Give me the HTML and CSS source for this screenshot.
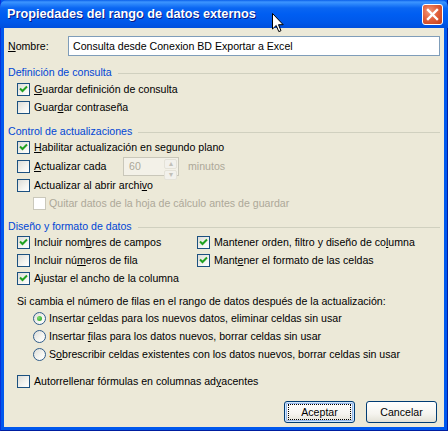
FILE: index.html
```html
<!DOCTYPE html>
<html lang="es">

<head>
    <meta charset="UTF-8">
    <title>Propiedades del rango de datos externos</title>
    <link rel="stylesheet" href="styles.css">
</head>

<body>
    <div class="window">
        <div class="titlebar">
            <span class="title">Propiedades del rango de datos externos</span>
            <span class="close">
                <svg width="13" height="13" viewBox="0 0 13 13">
                    <path d="M2 2 L11 11 M11 2 L2 11" stroke="#fff" stroke-width="2.4" stroke-linecap="square" />
                </svg>
            </span>
        </div>

        <div class="content">
            <div class="name-row">
                <label class="name-label"><u>N</u>ombre:</label>
                <div class="textbox">Consulta desde Conexion BD Exportar a Excel</div>
            </div>

            <div class="group-head">Definición de consulta</div>
            <div class="opt"><span class="box checked"></span><span><u>G</u>uardar definición de consulta</span></div>
            <div class="opt"><span class="box"></span><span>Guar<u>d</u>ar contraseña</span></div>

            <div class="group-head gap-8">Control de actualizaciones</div>
            <div class="opt"><span class="box checked"></span><span><u>H</u>abilitar actualización en segundo plano</span></div>
            <div class="opt tall">
                <span class="box"></span><span class="every"><u>A</u>ctualizar cada</span>
                <span class="spin">
                    <span class="spin-val">60</span>
                    <span class="spin-btns"><span class="spin-btn">&#9652;</span><span class="spin-btn">&#9662;</span></span>
                </span>
                <span class="muted minutes">minutos</span>
            </div>
            <div class="opt"><span class="box"></span><span>Actualizar al abrir archi<u>v</u>o</span></div>
            <div class="opt sub"><span class="box disabled"></span><span class="muted">Quitar datos de la hoja de cálculo antes de guardar</span></div>

            <div class="group-head gap-7">Diseño y formato de datos</div>
            <div class="two-col">
                <div class="opt"><span class="box checked"></span><span>Incluir nom<u>b</u>res de campos</span></div>
                <div class="opt flat"><span class="box checked"></span><span>Mantener orden, filtro y diseño de co<u>l</u>umna</span></div>
                <div class="opt"><span class="box"></span><span>Incluir nú<u>m</u>eros de fila</span></div>
                <div class="opt flat"><span class="box checked"></span><span>Mant<u>e</u>ner el formato de las celdas</span></div>
                <div class="opt"><span class="box checked"></span><span>A<u>j</u>ustar el ancho de la columna</span></div>
            </div>

            <div class="question">Si cambia el número de filas en el rango de datos después de la actualización:</div>
            <div class="radios">
                <div class="opt sub"><span class="radio on"></span><span>Insertar <u>c</u>eldas para los nuevos datos, eliminar celdas sin usar</span></div>
                <div class="opt sub"><span class="radio"></span><span>Insertar <u>f</u>ilas para los datos nuevos, borrar celdas sin usar</span></div>
                <div class="opt sub"><span class="radio"></span><span>S<u>o</u>brescribir celdas existentes con los datos nuevos, borrar celdas sin usar</span></div>
            </div>

            <div class="opt gap-9"><span class="box"></span><span>Autorrellenar fórmulas en columnas ad<u>y</u>acentes</span></div>

            <div class="buttons">
                <button class="btn default"><span class="focus">Aceptar</span></button>
                <button class="btn">Cancelar</button>
            </div>
        </div>

        <svg class="cursor" width="12" height="20" viewBox="0 0 12 20">
            <path d="M0.5 0.5 L0.5 16 L4.2 12.5 L6.8 18.6 L9 17.7 L6.5 11.7 L11.2 11.7 Z" fill="#fff" stroke="#000" stroke-width="1" />
        </svg>
    </div>
</body>

</html>
```

FILE: styles.css
```css
/* Reset */
* {
    box-sizing: border-box;
}

body {
    margin: 0;
    font-family: "Liberation Sans", Arial, sans-serif;
    font-size: 10.6px;
    color: #000;
    background: #ece9d8;
}

u {
    text-decoration: underline;
    text-underline-offset: 1px;
}

.window {
    position: relative;
    width: 448px;
    height: 431px;
    display: flex;
    flex-direction: column;
    background: #0058ee;
    padding: 0 3px 3px 3px;
    border-left: 1px solid #0831d9;
    border-right: 1px solid #001ea0;
    border-bottom: 1px solid #001ea0;
}

/* Title bar */
.titlebar {
    margin: 0 -4px;
    height: 28px;
    display: flex;
    align-items: center;
    justify-content: space-between;
    padding: 0 5px 1px 7px;
    border-radius: 7px 7px 0 0;
    background: linear-gradient(#0a5fe9 0, #3d95ff 2px, #2b86fb 4px, #0a66f2 8px, #005ef2 14px, #0058ea 22px, #004fdd 28px);
}

.title {
    color: #fff;
    font-weight: bold;
    font-size: 12.7px;
    text-shadow: 1px 1px 0 #0a1883;
}

.close {
    width: 21px;
    height: 21px;
    display: flex;
    align-items: center;
    justify-content: center;
    border: 1px solid #fff;
    border-radius: 3px;
    background: radial-gradient(circle at 35% 35%, #f39a7c 0, #e2613d 45%, #c23d17 100%);
    margin-top: 1px;
}

/* Dialog body */
.content {
    flex: 1;
    background: #ece9d8;
    padding: 8px 4px 0 4px;
    display: flex;
    flex-direction: column;
}

.name-row {
    display: flex;
    align-items: center;
    height: 20px;
}

.name-label {
    width: 60px;
}

.textbox {
    flex: 1;
    height: 20px;
    line-height: 18px;
    padding-left: 4px;
    border: 1px solid #7f9db9;
    background: #fff;
}

.group-head {
    display: flex;
    align-items: center;
    height: 14px;
    margin-top: 9px;
    margin-bottom: 1px;
    color: #0046d5;
}

.group-head::after {
    content: "";
    flex: 1;
    height: 1px;
    margin-left: 6px;
    margin-top: 2px;
    background: #d0d0bf;
}

.gap-8 {
    margin-top: 8px;
    margin-bottom: 0;
}

.gap-7 {
    margin-top: 7px;
    margin-bottom: 0;
}

.gap-9 {
    margin-top: 9px;
}

/* Options */
.opt {
    display: flex;
    align-items: center;
    gap: 4px;
    height: 18px;
    padding-left: 9px;
}

.opt.sub {
    padding-left: 25px;
    gap: 3px;
}

.opt.flat {
    padding-left: 0;
}

.opt.tall {
    height: 20px;
}

.box {
    width: 13px;
    height: 13px;
    flex: none;
    border: 1px solid #1c5180;
    background: linear-gradient(135deg, #dcdcd7 0%, #f4f4f0 60%, #fff 100%);
}

.box.checked {
    background:
        url("data:image/svg+xml,%3Csvg xmlns='http://www.w3.org/2000/svg' width='11' height='11'%3E%3Cpath d='M2 4.5 L4.5 7 L9 2.5' fill='none' stroke='%2321a121' stroke-width='2'/%3E%3C/svg%3E") no-repeat center,
        linear-gradient(135deg, #dcdcd7 0%, #f4f4f0 60%, #fff 100%);
}

.box.disabled {
    border-color: #cac8bb;
    background: #fff;
}

.muted {
    color: #aca899;
}

.every {
    width: 85px;
}

.spin {
    display: flex;
    width: 56px;
    height: 19px;
    border: 1px solid #c9c7ba;
    background: #f3f1e8;
}

.spin-val {
    flex: 1;
    padding-left: 5px;
    line-height: 17px;
    color: #aca899;
}

.spin-btns {
    display: flex;
    flex-direction: column;
    width: 15px;
    padding: 1px;
    gap: 1px;
}

.spin-btn {
    flex: 1;
    display: flex;
    align-items: center;
    justify-content: center;
    border-radius: 2px;
    background: #f2f1ec;
    border: 1px solid #e4e2d8;
    color: #c1c0b8;
    font-size: 8px;
    line-height: 1;
}

.minutes {
    margin-left: 5px;
}

.two-col {
    display: grid;
    grid-template-columns: 189px 1fr;
}

.question {
    height: 14px;
    line-height: 14px;
    margin-top: 7px;
    padding-left: 9px;
}

.radios {
    margin-top: 1px;
}

.radio {
    width: 13px;
    height: 13px;
    flex: none;
    border-radius: 50%;
    border: 1px solid #2f5c8a;
    background: linear-gradient(135deg, #dcdcd7 0%, #f6f6f2 60%, #fff 100%);
    display: flex;
    align-items: center;
    justify-content: center;
}

.radio.on::after {
    content: "";
    width: 5px;
    height: 5px;
    border-radius: 50%;
    background: radial-gradient(circle at 35% 35%, #7edb6c, #21a121);
}

/* Buttons */
.buttons {
    display: flex;
    justify-content: flex-end;
    gap: 11px;
    margin-top: 11px;
    padding-right: 3px;
}

.btn {
    width: 71px;
    height: 22px;
    padding: 0;
    font: inherit;
    color: #000;
    border: 1px solid #003c74;
    border-radius: 3px;
    background: linear-gradient(#fff 0%, #f5f4ef 60%, #e3e1d6 100%);
    display: flex;
    align-items: center;
    justify-content: center;
}

.btn.default {
    box-shadow: inset 0 0 0 1px #cee7ff, inset 0 0 0 2px #98b8ea;
}

.focus {
    display: flex;
    align-items: center;
    justify-content: center;
    width: 63px;
    height: 16px;
    border: 1px dotted #000;
}

.cursor {
    position: absolute;
    left: 271px;
    top: 13px;
}
```
